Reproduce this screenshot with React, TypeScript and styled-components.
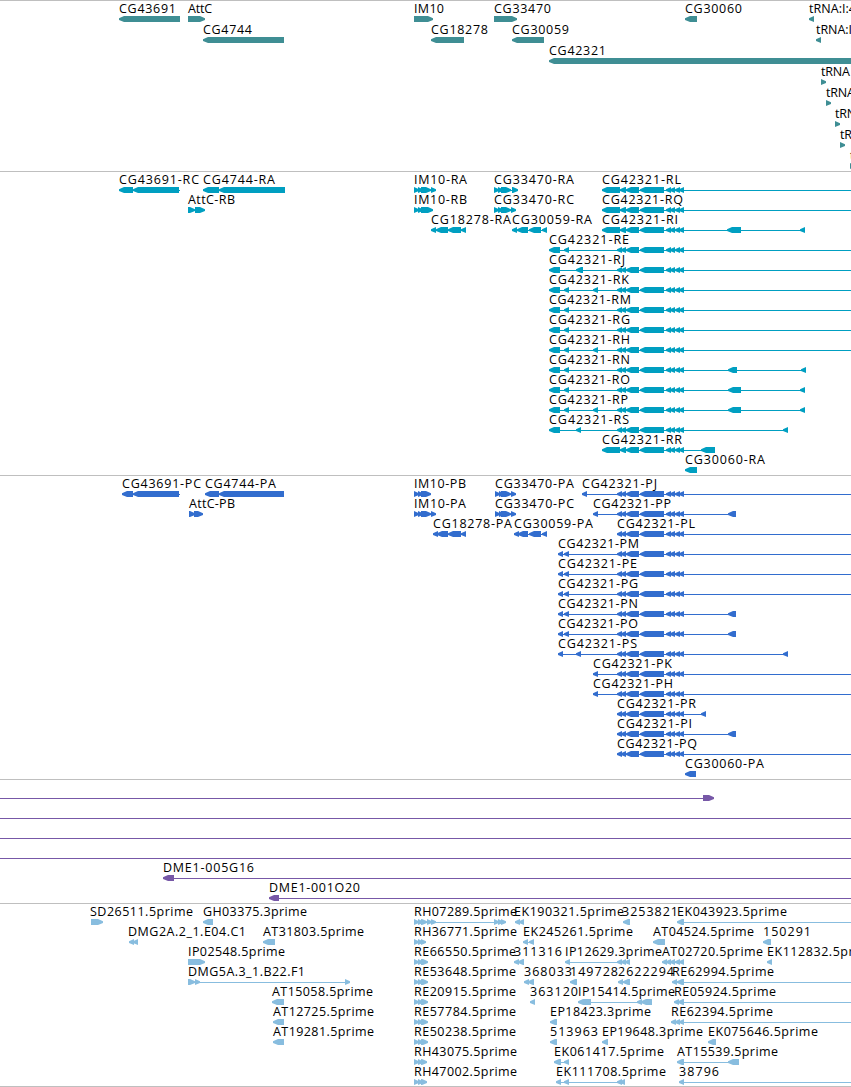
import React from "react";
import styled, { createGlobalStyle } from "styled-components";

const GlobalStyle = createGlobalStyle`
  body {
    margin: 0;
    background: #fff;
    overflow: hidden;
  }
`;

type Span = [number, number];

interface Feature {
  name?: string;
  labelX?: number;
  forward?: boolean;
  exons: Span[];
  line?: Span;
}

interface TrackData {
  id: string;
  color: string;
  pitch: number;
  height: number;
  rows: Feature[][];
}

/* Features that continue past the right edge of the visible region. */
const EDGE = 860;

const rev = (name: string, exons: Span[], end?: number, labelX?: number): Feature => ({
  name,
  exons,
  labelX,
  line: end ? [exons[0][0] + 2, end] : undefined,
});

const fwd = (name: string, exons: Span[], labelX?: number): Feature => ({
  name,
  exons,
  labelX,
  forward: true,
});

const shared: Span[] = [[626, 639], [640, 664], [666, 671], [670, 675], [675, 680], [679, 684]];
const core: Span[] = [[617, 622], [621, 626], ...shared];
const longCore: Span[] = [[602, 620], [620, 626], ...shared];
const utr: Span[] = [[549, 560], [564, 569]];
const cds: Span[] = [[558, 563], [564, 569]];

const genes: Feature[][] = [
  [
    rev("CG43691", [[119, 180]]),
    fwd("AttC", [[188, 205]]),
    fwd("IM10", [[414, 433]]),
    fwd("CG33470", [[494, 517]]),
    rev("CG30060", [[685, 697]]),
    rev("tRNA:I:4", [[809, 814]]),
  ],
  [
    rev("CG4744", [[203, 284]]),
    rev("CG18278", [[431, 464]]),
    rev("CG30059", [[512, 544]]),
    rev("tRNA:I", [[816, 821]]),
  ],
  [rev("CG42321", [[549, EDGE]])],
  [fwd("tRNA", [[821, 826]])],
  [fwd("tRNA", [[826, 831]])],
  [fwd("tRNA", [[835, 840]])],
  [fwd("tRNA", [[840, 845]])],
  [fwd("tRNA", [[850, 855]])],
];

const transcripts: Feature[][] = [
  [
    rev("CG43691-RC", [[119, 133], [133, 179]], 180),
    rev("CG4744-RA", [[203, 219], [219, 285]]),
    fwd("IM10-RA", [[414, 419], [418, 423], [421, 431], [431, 436]]),
    fwd("CG33470-RA", [[494, 499], [498, 503], [501, 511], [512, 518]]),
    rev("CG42321-RL", longCore, EDGE),
  ],
  [
    fwd("AttC-RB", [[188, 195], [195, 205]]),
    fwd("IM10-RB", [[414, 419], [418, 423], [421, 433]]),
    fwd("CG33470-RC", [[494, 499], [498, 503], [501, 511], [511, 516]]),
    rev("CG42321-RQ", longCore, EDGE),
  ],
  [
    rev("CG18278-RA", [[431, 436], [436, 448], [448, 461], [461, 466]]),
    rev("CG30059-RA", [[512, 517], [517, 528], [529, 541], [542, 547]]),
    rev("CG42321-RI", [...longCore, [727, 741], [800, 805]]),
  ],
  [rev("CG42321-RE", [...utr, ...core], EDGE)],
  [rev("CG42321-RJ", [[549, 560], [576, 583], ...core], EDGE)],
  [rev("CG42321-RK", [...utr, [593, 598], ...core], EDGE)],
  [rev("CG42321-RM", [...utr, ...core], EDGE)],
  [rev("CG42321-RG", [...utr, ...core], EDGE)],
  [rev("CG42321-RH", [...utr, [593, 598], ...core], EDGE)],
  [rev("CG42321-RN", [...utr, ...core, [728, 737], [801, 806]])],
  [rev("CG42321-RO", [...utr, ...core, [728, 741], [800, 805]])],
  [rev("CG42321-RP", [...utr, [593, 598], ...core, [728, 741], [800, 805]])],
  [rev("CG42321-RS", [[549, 560], [576, 581], ...core, [783, 788]])],
  [rev("CG42321-RR", [...longCore, [701, 715]])],
  [rev("CG30060-RA", [[685, 697]])],
];

const proteins: Feature[][] = [
  [
    rev("CG43691-PC", [[122, 133], [133, 179]], 180),
    rev("CG4744-PA", [[205, 219], [219, 284]]),
    fwd("IM10-PB", [[414, 419], [418, 423], [421, 431]]),
    fwd("CG33470-PA", [[495, 500], [499, 504], [501, 511], [511, 516]]),
    rev("CG42321-PJ", [[582, 587], ...core], EDGE),
  ],
  [
    fwd("AttC-PB", [[189, 195], [194, 203]]),
    fwd("IM10-PA", [[414, 419], [418, 423], [421, 431], [431, 436]]),
    fwd("CG33470-PC", [[495, 500], [499, 504], [501, 511], [511, 516]]),
    rev("CG42321-PP", [[593, 598], ...core, [728, 736]]),
  ],
  [
    rev("CG18278-PA", [[433, 438], [437, 448], [448, 461], [461, 466]]),
    rev("CG30059-PA", [[514, 519], [518, 528], [529, 541], [542, 547]]),
    rev("CG42321-PL", core, EDGE),
  ],
  [rev("CG42321-PM", [...cds, ...core], EDGE)],
  [rev("CG42321-PE", [...cds, ...core], EDGE)],
  [rev("CG42321-PG", [...cds, ...core], EDGE)],
  [rev("CG42321-PN", [...cds, ...core, [728, 736]])],
  [rev("CG42321-PO", [...cds, ...core, [728, 736]])],
  [rev("CG42321-PS", [[558, 563], [576, 581], ...core, [783, 788]])],
  [rev("CG42321-PK", [[593, 598], ...core], EDGE)],
  [rev("CG42321-PH", [[593, 598], ...core], EDGE)],
  [rev("CG42321-PR", [...core, [701, 706]])],
  [rev("CG42321-PI", [...core, [728, 736]])],
  [rev("CG42321-PQ", core, EDGE)],
  [rev("CG30060-PA", [[685, 696]])],
];

const clones: Feature[][] = [
  [{ forward: true, exons: [[703, 714]], line: [0, 705] }],
  [{ exons: [], line: [0, EDGE] }],
  [{ exons: [], line: [0, EDGE] }],
  [{ exons: [], line: [0, EDGE] }],
  [rev("DME1-005G16", [[163, 174]], EDGE)],
  [rev("DME1-001O20", [[269, 279]], EDGE)],
];

const readStart = (name: string, end: number) =>
  fwd(name, [[414, 419], [418, 423], [421, end]]);

const reads: Feature[][] = [
  [
    fwd("SD26511.5prime", [[91, 103]], 90),
    rev("GH03375.3prime", [[203, 213]]),
    fwd("RH07289.5prime", [[414, 419], [418, 423], [421, 427], [427, 432], [431, 436], [494, 499], [498, 503], [501, 506]]),
    rev("EK190321.5prime", [[515, 520], [519, 524]], undefined, 514),
    rev("3253821", [[623, 630]], undefined, 622),
    rev("EK043923.5prime", [[677, 684]], EDGE),
  ],
  [
    rev("DMG2A.2_1.E04.C1", [[129, 134], [133, 138]], undefined, 128),
    rev("AT31803.5prime", [[263, 275]]),
    readStart("RH36771.5prime", 426),
    rev("EK245261.5prime", [[523, 528], [529, 534]]),
    rev("AT04524.5prime", [[653, 665]]),
    rev("150291", [[763, 771]]),
  ],
  [
    fwd("IP02548.5prime", [[188, 205]]),
    readStart("RE66550.5prime", 428),
    rev("311316", [[514, 519], [518, 524]]),
    rev("IP12629.3prime", [[565, 570], [617, 622], [621, 626], [625, 630]]),
    rev("AT02720.5prime", [[662, 667], [666, 671], [670, 675], [675, 680], [679, 684]]),
    rev("EK112832.5prime", [[767, 772]]),
  ],
  [
    fwd("DMG5A.3_1.B22.F1", [[188, 195], [195, 200], [345, 350]]),
    readStart("RE53648.5prime", 428),
    rev("368033", [[524, 529], [528, 534]]),
    rev("149728", [[570, 577]]),
    rev("2622294", [[618, 623], [623, 630]]),
    rev("RE62994.5prime", [[672, 677], [677, 684]], EDGE),
  ],
  [
    rev("AT15058.5prime", [[272, 284]]),
    readStart("RE20915.5prime", 428),
    rev("363120", [[530, 535]]),
    rev("IP15414.5prime", [[578, 591], [637, 642], [641, 652]]),
    rev("RE05924.5prime", [[674, 679], [678, 684]], EDGE),
  ],
  [
    rev("AT12725.5prime", [[273, 284]]),
    readStart("RE57784.5prime", 428),
    rev("EP18423.3prime", [[550, 557]]),
    rev("RE62394.5prime", [[671, 676], [675, 680], [679, 684]], EDGE),
  ],
  [
    rev("AT19281.5prime", [[273, 284]]),
    readStart("RE50238.5prime", 428),
    rev("513963", [[550, 557]]),
    rev("EP19648.3prime", [[602, 608]]),
    rev("EK075646.5prime", [[708, 716]]),
  ],
  [
    readStart("RH43075.5prime", 427),
    rev("EK061417.5prime", [[554, 561], [564, 569]]),
    rev("AT15539.5prime", [[677, 684], [728, 739]]),
  ],
  [
    readStart("RH47002.5prime", 427),
    rev("EK111708.5prime", [[556, 561], [564, 569], [617, 622], [620, 625]]),
    rev("38796", [[679, 684]], EDGE),
  ],
];

const tracks: TrackData[] = [
  { id: "genes", color: "#3f8e94", pitch: 21, height: 171, rows: genes },
  { id: "transcripts", color: "#009fc1", pitch: 20, height: 304, rows: transcripts },
  { id: "proteins", color: "#326dce", pitch: 20, height: 304, rows: proteins },
  { id: "clones", color: "#7758a7", pitch: 20, height: 124, rows: clones },
  { id: "reads", color: "#88bddf", pitch: 20, height: 183, rows: reads },
];

const Browser = styled.main`
  display: flex;
  flex-direction: column;
  width: 851px;
  height: 1087px;
  overflow: hidden;
  background: #fff;
`;

const Track = styled.section<{ $height: number; $color: string }>`
  box-sizing: border-box;
  flex: none;
  height: ${(p) => p.$height}px;
  border-top: 1px solid #bfbfbf;
  color: ${(p) => p.$color};
`;

const EndRule = styled.div`
  flex: none;
  height: 1px;
  background: #bfbfbf;
`;

const Lane = styled.svg<{ $pitch: number }>`
  display: block;
  width: 851px;
  height: ${(p) => p.$pitch}px;
  overflow: visible;
`;

const Label = styled.text`
  font-family: "Open Sans", "DejaVu Sans", sans-serif;
  font-size: 12.5px;
  fill: #000;
`;

const Exon = styled.polygon`
  fill: currentColor;
`;

const Intron = styled.rect`
  fill: currentColor;
  shape-rendering: crispEdges;
`;

const TOP = 15;
const BOTTOM = 21;
const TIP_TOP = 17.3;
const TIP_BOTTOM = 19;
const HEAD = 5;

function exonPoints([start, end]: Span, forward?: boolean) {
  const head = Math.min(HEAD, end - start);
  const [tip, shoulder, back] = forward
    ? [end, end - head, start]
    : [start, start + head, end];
  return `${tip},${TIP_TOP} ${shoulder},${TOP} ${back},${TOP} ${back},${BOTTOM} ${shoulder},${BOTTOM} ${tip},${TIP_BOTTOM}`;
}

const ADVANCE: Record<string, number> = {
  C: 8, G: 9, A: 8, I: 4, M: 10, R: 8, P: 7, B: 8, Q: 9, E: 8, J: 4, K: 8, N: 9,
  H: 9, O: 9, S: 8, L: 7, D: 9, F: 7, T: 7, "-": 7, ".": 4, ":": 3, _: 6,
  p: 8, r: 5, i: 3, m: 11, e: 7, t: 4,
};

function labelWidth(text: string) {
  return [...text].reduce((sum, ch) => sum + (ADVANCE[ch] ?? 8), 0);
}

function Glyph({ feature }: { feature: Feature }) {
  const { name, exons, forward } = feature;
  const line: Span | undefined =
    feature.line ??
    (exons.length > 1 ? [exons[0][0] + 2, exons[exons.length - 1][1] - 1] : undefined);
  return (
    <g>
      {line && <Intron x={line[0]} y={18} width={line[1] - line[0]} height={1} />}
      {exons.map((exon, i) => (
        <Exon key={i} points={exonPoints(exon, forward)} />
      ))}
      {name && (
        <Label x={feature.labelX ?? exons[0][0]} y={12} textLength={labelWidth(name)}>
          {name}
        </Label>
      )}
    </g>
  );
}

export default function App() {
  return (
    <>
      <GlobalStyle />
      <Browser>
        {tracks.map((track) => (
          <Track key={track.id} $height={track.height} $color={track.color}>
            {track.rows.map((row, i) => (
              <Lane key={i} $pitch={track.pitch}>
                {row.map((feature, j) => (
                  <Glyph key={j} feature={feature} />
                ))}
              </Lane>
            ))}
          </Track>
        ))}
        <EndRule />
      </Browser>
    </>
  );
}
